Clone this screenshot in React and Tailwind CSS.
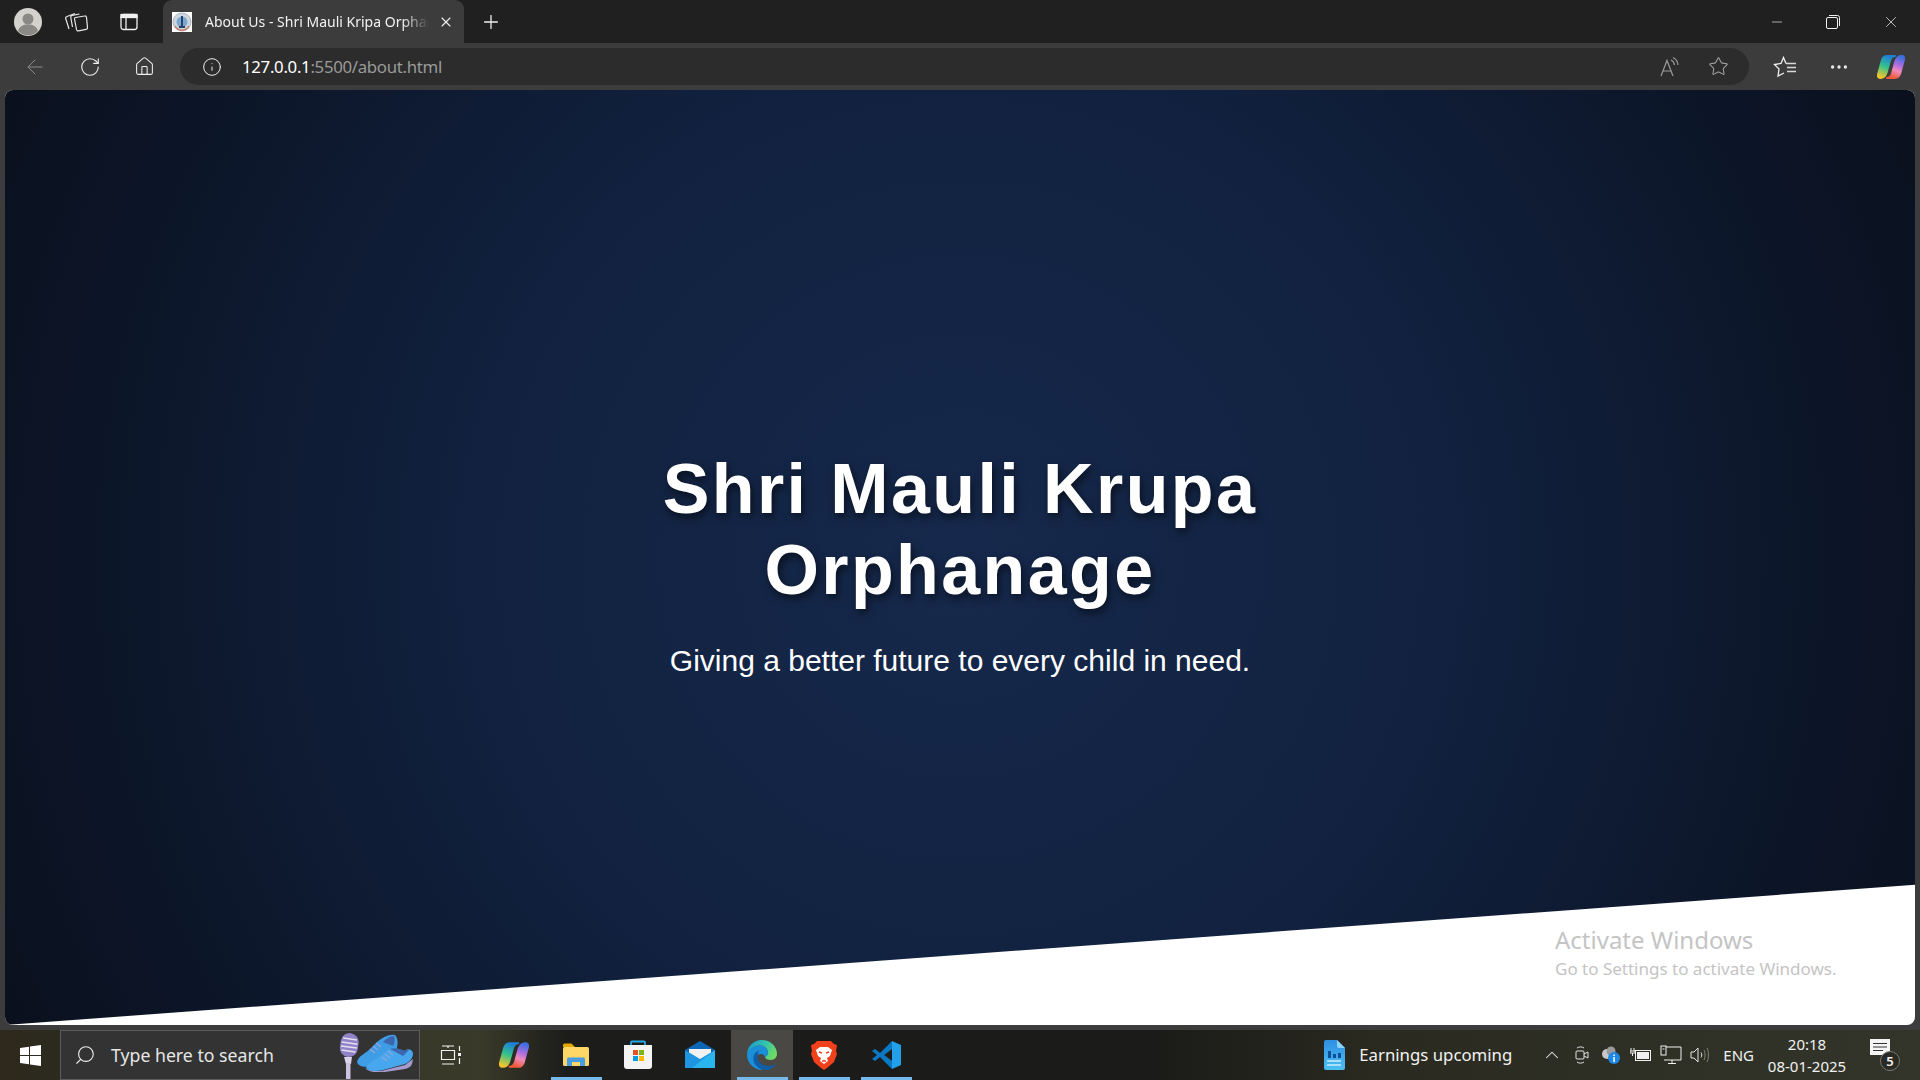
import { ArrowLeft, RotateCw, Home, Info, Star, MoreHorizontal, Plus, X, Minus, Search, ChevronUp } from "lucide-react";

const UI_FONT = "font-['Noto_Sans','Open_Sans',sans-serif]";

function Avatar() {
  return (
    <svg width="28" height="28" viewBox="0 0 28 28">
      <circle cx="14" cy="14" r="14" fill="#d4d2cd" />
      <circle cx="14" cy="11" r="5.5" fill="#8b8985" />
      <path d="M4 23c1.5-5 5-6.5 10-6.5s8.5 1.5 10 6.5a14 14 0 0 1-20 0z" fill="#8b8985" />
    </svg>
  );
}

function Collections() {
  return (
    <svg width="24" height="24" viewBox="0 0 24 24" fill="none" stroke="#e6e6e6" strokeWidth="1.2">
      <path d="M11.500 7.500l9-1.500c1-.2 1.800.4 2 1.400l1 10c.1 1-.5 1.800-1.500 2l-7.500 1.500c-1 .2-1.800-.4-2-1.400l-2-10.500c-.1-.7 0-1.300 1-1.500z" />
      <path d="M8.500 17 6.800 7.500c-.2-1 .4-1.900 1.400-2.100L15.500 4" />
      <path d="M5 19 1.800 8.800c-.3-1 .2-2 1.200-2.300L11 3.500" />
    </svg>
  );
}

function TabLayout() {
  return (
    <svg width="18" height="18" viewBox="0 0 18 18" fill="none" stroke="#f0f0f0" strokeWidth="1.3">
      <rect x="1" y="1.5" width="16" height="15" rx="2.5" />
      <rect x="1" y="1.5" width="16" height="3" fill="#f0f0f0" />
      <path d="M6 4.5v12" />
    </svg>
  );
}

function Favicon() {
  return (
    <svg width="20" height="20" viewBox="0 0 20 20" className="shrink-0">
      <rect width="20" height="20" fill="#fff" />
      <circle cx="10" cy="10" r="9" fill="#cfd6de" stroke="#a9b5c6" />
      <circle cx="10" cy="10" r="5.5" fill="#7ea7cf" />
      <path d="M10 4v11M7 15h6" stroke="#26436b" strokeWidth="2" />
      <path d="M3 14a8 8 0 0 0 14 0" stroke="#c87a6a" strokeWidth="1.5" fill="none" />
    </svg>
  );
}

function ReadAloud() {
  return (
    <svg width="22" height="22" viewBox="0 0 22 22" fill="none" stroke="#9a9a9a" strokeWidth="1.2">
      <path d="M2 20 8 4.5 14 20M4.2 15h7.6" />
      <path d="M12 4a6 6 0 0 1 3.5 5M14 1.5a9 9 0 0 1 5 7.5" />
    </svg>
  );
}

function Favorites() {
  return (
    <svg width="24" height="22" viewBox="0 0 24 22" fill="none" stroke="#f0f0f0" strokeWidth="1.3">
      <path d="M13 7.500 10.500 1.500 8 7.500 1.500 8.500 6 13 5 20l6-3" />
      <path d="M13 7.500h10M14 11.500h9M14 15.500h9" stroke="#d8d8d8" />
    </svg>
  );
}

function Copilot({ size = 28, id }) {
  const left = "M10 3h8c-2.500 0-4 1.500-5 4.500L9.500 20c-1 3-3 5-6 5H3c-1.500 0-2.500-1.500-2-3.500L5 7c1-2.500 3-4 5-4z";
  const right = "M18 25h-8c2.500 0 4-1.500 5-4.500L18.500 8c1-3 3-5 6-5h.5c1.500 0 2.500 1.500 2 3.500L23 21c-1 2.500-3 4-5 4z";
  return (
    <svg width={size} height={size} viewBox="0 0 28 28">
      <defs>
        <linearGradient id={`${id}a`} x1="0.6" y1="0" x2="0.3" y2="1">
          <stop offset="0" stopColor="#1d7fd8" />
          <stop offset="0.5" stopColor="#35c28a" />
          <stop offset="1" stopColor="#f3c52c" />
        </linearGradient>
        <linearGradient id={`${id}b`} x1="0.7" y1="0" x2="0.4" y2="1">
          <stop offset="0" stopColor="#3c6fe0" />
          <stop offset="0.4" stopColor="#b06ee0" />
          <stop offset="0.65" stopColor="#f08ab8" />
          <stop offset="1" stopColor="#ef5a3a" />
        </linearGradient>
      </defs>
      <path d={left} fill={`url(#${id}a)`} stroke={`url(#${id}a)`} strokeWidth="2" strokeLinejoin="round" />
      <path d={right} fill={`url(#${id}b)`} stroke={`url(#${id}b)`} strokeWidth="2" strokeLinejoin="round" />
    </svg>
  );
}

function Mic() {
  return (
    <svg width="24" height="46" viewBox="0 0 24 46">
      <g transform="rotate(8 12 14)">
        <rect x="3" y="0" width="18" height="24" rx="9" fill="#8f82c6" />
        <path d="M5 6h14M4 10h16M4 14h16M5 18h14" stroke="#e4e0f4" strokeWidth="1.500" />
      </g>
      <path d="M7 24h8l-1 7h-5z" fill="#d8d3ea" />
      <rect x="9" y="30" width="4.500" height="16" fill="#c9c2e0" />
    </svg>
  );
}

function Shoes() {
  return (
    <svg width="56" height="38" viewBox="0 0 56 38">
      <path d="M0 28C1 22 8 20 13 15l7-7C26 3 32 0 38 1c3 3 4 11 0 17L20 30C12 34 2 34 0 28z" fill="#3f9de6" />
      <path d="M26 8c3-3 7-6 11-6 1 3 1 7-1 10z" fill="#3c66ae" />
      <path d="M13 15l5 4M16 12l5 4M19 9l5 4" stroke="#8fa5dc" strokeWidth="1.500" />
      <path d="M8 34c4 3 14 4 20 2l20-5 8-6-1 5c-1 3-4 4-7 5l-20 3c-8 1-17 0-20-4z" fill="#a59ad0" />
      <path d="M9 33C12 27 20 26 27 19l5-4c6-2 12 1 16 2 2-3 7-2 8 2 0 6-4 9-8 11l-22 6C18 38 10 37 9 33z" fill="#46a7ee" />
      <path d="M33 15c4-2 11 0 15 2 1-1 3-2 4-1l-6 6z" fill="#3c66ae" />
      <path d="M25 23l5 4M28 20l5 4M31 17l5 4" stroke="#8fa5dc" strokeWidth="1.500" />
    </svg>
  );
}

function TaskView() {
  return (
    <svg width="22" height="20" viewBox="0 0 22 20" fill="none" stroke="#f2f2f2" strokeWidth="1.2">
      <path d="M2 1h12M2 19h12M8 1v2M1.500 5.500h13v9h-13z" />
      <path d="M19.500 1v5M19.500 13v6" />
      <rect x="18" y="8" width="3" height="3" fill="#f2f2f2" stroke="none" />
    </svg>
  );
}

function Explorer() {
  return (
    <svg width="28" height="24" viewBox="0 0 28 24">
      <path d="M1 2a1.500 1.500 0 0 1 1.500-1.500h7L13 4h-12z" fill="#e0a800" />
      <rect x="1" y="4" width="26" height="19" rx="1.500" fill="#ffd766" />
      <path d="M5 23v-7a1.500 1.500 0 0 1 1.500-1.500h15A1.500 1.500 0 0 1 23 16v7h-5v-4h-8v4z" fill="#4a9de0" />
    </svg>
  );
}

function Store() {
  return (
    <svg width="30" height="30" viewBox="0 0 30 30">
      <path d="M8 5V2.500A1 1 0 0 1 9 1.500h12a1 1 0 0 1 1 1V5" fill="none" stroke="#28a8ea" strokeWidth="1.800" />
      <path d="M1 5h28v21a3 3 0 0 1-3 3H4a3 3 0 0 1-3-3z" fill="#f4f4f4" />
      <rect x="10" y="10" width="5" height="5" fill="#e9502a" />
      <rect x="16" y="10" width="5" height="5" fill="#7cb518" />
      <rect x="10" y="16" width="5" height="5" fill="#0a9be8" />
      <rect x="16" y="16" width="5" height="5" fill="#fdb900" />
    </svg>
  );
}

function Mail() {
  return (
    <svg width="30" height="30" viewBox="0 0 30 30">
      <path d="M0 10 15 1l15 9-15 9z" fill="#0b66b5" />
      <path d="M4 9h22v8l-11 6-11-6z" fill="#f1f1f1" />
      <path d="M0 10v18h30V10L15 19z" fill="#1d95e0" />
      <path d="M30 10v18H7z" fill="#2bb5ef" />
    </svg>
  );
}

function Edge() {
  return (
    <svg width="30" height="30" viewBox="0 0 30 30">
      <defs>
        <linearGradient id="edgeTop" x1="0" y1="0.2" x2="1" y2="0.6">
          <stop offset="0" stopColor="#1a9bd6" />
          <stop offset="0.55" stopColor="#35c5a8" />
          <stop offset="1" stopColor="#72dc62" />
        </linearGradient>
      </defs>
      <path d="M15 0c8 0 15 6 15 14 0 3-2.500 6-6.500 6-3 0-5-1-5.500-3 1.500-1 3-2.500 3-4.500 0-4-4-7-8-7C7 5.500 1 10 0 15 0 7 6 0 15 0z" fill="url(#edgeTop)" />
      <path d="M0 15C1 9 7 5.500 13 5.500c4 0 8 3 8 7 0 2-1.500 3.500-3 4.500-1-3-5-4-7.500-2-3 3-1 11 5 15C7 30 0 23 0 15z" fill="#1b8fd8" />
      <path d="M12 10.500c-4 1.500-6.500 5-5.500 10 1 5 6.500 9.500 12.500 9.500 4.500 0 8-2.500 10-6-2 1-4.500 2-7 2-5 0-9-2-11-6.500-1-3 0-6.500 1-9z" fill="#0f5ea8" />
    </svg>
  );
}

function Brave() {
  return (
    <svg width="26" height="30" viewBox="0 0 26 30">
      <path d="M6 1h14l3 3 3 1-1 6 1 3-3 8-7 6-3 2-3-2-7-6-3-8 1-3-1-6 3-1z" fill="#f0411c" />
      <path d="M5 10l4-3h8l4 3-2 6-3 2 1 3-4 3-4-3 1-3-3-2z" fill="#fff" />
      <path d="M8 12l3 1M18 12l-3 1M11 21h4" stroke="#f0411c" strokeWidth="1.500" />
    </svg>
  );
}

function VSCode() {
  return (
    <svg width="30" height="30" viewBox="0 0 30 30">
      <path d="M21 1 9 13l-5-4-3 2 5 4-5 4 3 2 5-4 12 12z" fill="#0a78c4" />
      <path d="M21 1l9 4v20l-9 4 0-8-8-6 8-6z" fill="#22a1ea" />
      <path d="M21 9v12l-8-6z" fill="#1c1c1a" />
    </svg>
  );
}

function Earnings() {
  return (
    <svg width="22" height="32" viewBox="0 0 22 32">
      <defs>
        <linearGradient id="doc" x1="0" y1="0" x2="0" y2="1">
          <stop offset="0" stopColor="#2f8fe4" />
          <stop offset="1" stopColor="#4cc0f0" />
        </linearGradient>
      </defs>
      <path d="M3 1h11l8 8v20a2 2 0 0 1-2 2H3a2 2 0 0 1-2-2V3a2 2 0 0 1 2-2z" fill="url(#doc)" />
      <path d="M14 1l8 8h-6a2 2 0 0 1-2-2z" fill="#8fd2f8" />
      <path d="M5 12h3v7H5zM10 15h3v4h-3zM15 14h3v5h-3z" fill="#0d4f96" />
      <path d="M4 22h14M4 26h14" stroke="#cdeeff" strokeWidth="1.500" />
    </svg>
  );
}

function TrayIcons() {
  return (
    <>
      <svg width="16" height="20" viewBox="0 0 16 20" fill="none" stroke="#e6e6e6" strokeWidth="1" className="ml-[11px]">
        <rect x="2" y="6" width="8" height="8" rx="1" />
        <path d="M10 9l4-2v6l-4-2M3 3c2-1.500 5-1.500 7 0M3 17c2 1.500 5 1.500 7 0" />
      </svg>
      <svg width="20" height="18" viewBox="0 0 20 18" className="ml-[11px]">
        <circle cx="6" cy="8" r="5" fill="#c9c9c9" />
        <circle cx="10" cy="5" r="4.500" fill="#9a9a9a" />
        <circle cx="13" cy="12" r="6" fill="#1e88e5" />
        <rect x="12.300" y="11" width="1.500" height="5" fill="#fff" />
        <rect x="12.300" y="8.500" width="1.500" height="1.500" fill="#fff" />
      </svg>
      <svg width="22" height="16" viewBox="0 0 22 16" fill="none" stroke="#f0f0f0" strokeWidth="1" className="ml-[9px]">
        <rect x="5.500" y="3.500" width="15" height="10" />
        <rect x="7" y="5" width="12" height="7" fill="#f0f0f0" stroke="none" />
        <path d="M1 1v3M4 1v3M0 4h5v2H0zM2.500 6v3" />
      </svg>
      <svg width="22" height="20" viewBox="0 0 22 20" fill="none" stroke="#f0f0f0" strokeWidth="1" className="ml-[8px]">
        <path d="M4 2h17v13H4M12 15v3M8 18.500h8" />
        <rect x="1" y="1" width="5" height="9" fill="#2a2a20" />
        <path d="M2.500 4h2" />
      </svg>
      <svg width="20" height="18" viewBox="0 0 20 18" fill="none" stroke="#e6e6e6" strokeWidth="1" className="ml-[8px]">
        <path d="M1 6h3l4-4v14l-4-4H1z" />
        <path d="M11 6.500c1 1.500 1 3.500 0 5" />
        <path d="M14 4c1.500 3 1.500 7 0 10M17 2c2 4 2 10 0 14" stroke="#808080" />
      </svg>
    </>
  );
}

function TaskSlot({ children, running, active, first }) {
  return (
    <div className={`relative flex h-[50px] w-[62px] items-center justify-center ${first ? "ml-[1px]" : ""} ${active ? "bg-[#4a4845]" : ""}`}>
      {children}
      {running && <div className="absolute bottom-0 left-[6px] right-[5px] h-[3px] bg-[#76b9ed]" />}
    </div>
  );
}

export default function App() {
  return (
    <div className={`flex h-screen w-full flex-col overflow-hidden bg-[#3c3c3c] ${UI_FONT}`}>
      {/* title bar */}
      <div className="flex h-[43px] shrink-0 items-center bg-[#202020]">
        <div className="ml-[14px]"><Avatar /></div>
        <div className="ml-[22px]"><Collections /></div>
        <div className="ml-[32px]"><TabLayout /></div>
        <div className="ml-[25px] flex h-full w-[301px] items-center rounded-t-[9px] bg-[#3c3c3c] pl-[9px] pr-[10px]">
          <Favicon />
          <div className="ml-[13px] w-[224px] overflow-hidden whitespace-nowrap text-[14px] text-[#f2f2f2] [mask-image:linear-gradient(to_right,black_88%,transparent)]">
            About Us - Shri Mauli Kripa Orphanage
          </div>
          <X size={16} strokeWidth={1.6} className="ml-auto text-[#f0f0f0]" />
        </div>
        <Plus size={22} strokeWidth={1.4} className="ml-[16px] text-[#f0f0f0]" />
        <div className="ml-auto flex items-center">
          <Minus size={16} strokeWidth={1} className="text-[#f0f0f0]" />
          <svg width="14" height="14" viewBox="0 0 14 14" fill="none" stroke="#f0f0f0" strokeWidth="1" className="ml-[41px]">
            <rect x="0.500" y="2.500" width="11" height="11" rx="1.500" />
            <path d="M3 .5h8.500A2 2 0 0 1 13.500 2.500V11" />
          </svg>
          <X size={18} strokeWidth={1} className="ml-[42px] mr-[20px] text-[#f0f0f0]" />
        </div>
      </div>

      {/* toolbar */}
      <div className="flex h-[47px] shrink-0 items-center">
        <ArrowLeft size={24} strokeWidth={1} className="ml-[23px] text-[#8a8a8a]" />
        <RotateCw size={22} strokeWidth={1.2} className="ml-[32px] text-[#f0f0f0]" />
        <Home size={21} strokeWidth={1.2} className="ml-[33px] text-[#f0f0f0]" />
        <div className="ml-[25px] flex h-[37px] w-[1569px] items-center rounded-full bg-[#2c2c2c]">
          <Info size={20} strokeWidth={1.2} className="ml-[22px] text-[#f0f0f0]" />
          <div className="ml-[20px] text-[16.8px] tracking-[-0.3px]">
            <span className="text-white">127.0.0.1</span>
            <span className="text-[#9a9a9a]">:5500/about.html</span>
          </div>
          <div className="ml-auto flex items-center">
            <ReadAloud />
            <Star size={21} strokeWidth={1.2} className="ml-[27px] mr-[20px] text-[#a0a0a0]" />
          </div>
        </div>
        <div className="ml-[24px]"><Favorites /></div>
        <MoreHorizontal size={22} strokeWidth={1.6} className="ml-[31px] text-[#f0f0f0]" />
        <div className="ml-[27px]"><Copilot id="top" /></div>
      </div>

      {/* page */}
      <div className="relative mx-[5px] h-[935px] shrink-0 overflow-hidden rounded-[8px] bg-white">
        <div className="flex h-full flex-col items-center justify-center bg-[radial-gradient(circle,#16294c_0%,#11213f_45%,#0a101d_100%)] pt-[12px] text-center text-white [clip-path:polygon(0_0,100%_0,100%_85%,0_100%)] font-['Liberation_Sans',sans-serif]">
          <h1 className="w-[800px] text-[70px] font-bold leading-[81px] tracking-[2.4px] [text-shadow:2px_4px_8px_rgba(0,0,0,0.6)]">
            Shri Mauli Krupa Orphanage
          </h1>
          <p className="mt-[32px] text-[30px] leading-[36px]">Giving a better future to every child in need.</p>
        </div>
        <div className="absolute bottom-[43px] left-[1550px] text-[#c4c4c4]">
          <div className="text-[24px] leading-[32px]">Activate Windows</div>
          <div className="text-[17px] leading-[26px]">Go to Settings to activate Windows.</div>
        </div>
      </div>

      {/* taskbar */}
      <div className="mt-[5px] flex h-[50px] flex-1 items-center bg-[linear-gradient(90deg,#2e281c_0%,#2c2b20_3%,#3a3a2a_25%,#1c1c1a_29.500%,#1b1b19_60%,#2a2a20_72%,#33352a_100%)] text-[#f2f2f2]">
        <div className="flex w-[60px] shrink-0 justify-center">
          <svg width="21" height="21" viewBox="0 0 21 21" fill="#fff">
            <path d="M0 3l9-1.300V10H0zM10 1.500 21 0v10H10zM0 11h9v8.300L0 18zM10 11h11v10l-11-1.500z" />
          </svg>
        </div>
        <div className="relative flex h-[50px] w-[360px] shrink-0 items-center border border-[#5c5c5c] bg-[#333333]">
          <Search size={22} strokeWidth={1.2} className="ml-[13px] -scale-x-100 text-[#f0f0f0]" />
          <span className="ml-[15px] text-[17.700px] text-[#e6e6e6]">Type here to search</span>
          <div className="absolute bottom-0 left-[276px]"><Mic /></div>
          <div className="absolute bottom-[7px] left-[296px]"><Shoes /></div>
        </div>
        <TaskSlot><TaskView /></TaskSlot>
        <TaskSlot first><Copilot id="bar" size={30} /></TaskSlot>
        <TaskSlot running><Explorer /></TaskSlot>
        <TaskSlot><Store /></TaskSlot>
        <TaskSlot><Mail /></TaskSlot>
        <TaskSlot running active><Edge /></TaskSlot>
        <TaskSlot running><Brave /></TaskSlot>
        <TaskSlot running><VSCode /></TaskSlot>

        <div className="ml-auto flex items-center">
          <Earnings />
          <span className="ml-[14px] text-[16.800px]">Earnings upcoming</span>
          <ChevronUp size={22} strokeWidth={1.1} className="ml-[29px]" />
          <TrayIcons />
          <span className="ml-[13px] text-[15px]">ENG</span>
          <div className="ml-[11px] w-[84px] text-center text-[15px] leading-[22px]">
            <div>20:18</div>
            <div>08-01-2025</div>
          </div>
          <div className="relative ml-[21px] mr-[20px] h-[32px] w-[30px]">
            <svg width="20" height="20" viewBox="0 0 20 20" className="absolute left-0 top-0">
              <path d="M0 0h20v16H0z" fill="#f5f5f5" />
              <path d="M3 4.500h14M3 8h14M3 11.500h10" stroke="#333" strokeWidth="1" />
            </svg>
            <div className="absolute bottom-0 right-0 flex h-[20px] w-[20px] items-center justify-center rounded-full border border-[#777] bg-[#2a2a22] text-[13px] font-semibold leading-none">5</div>
          </div>
        </div>
      </div>
    </div>
  );
}
